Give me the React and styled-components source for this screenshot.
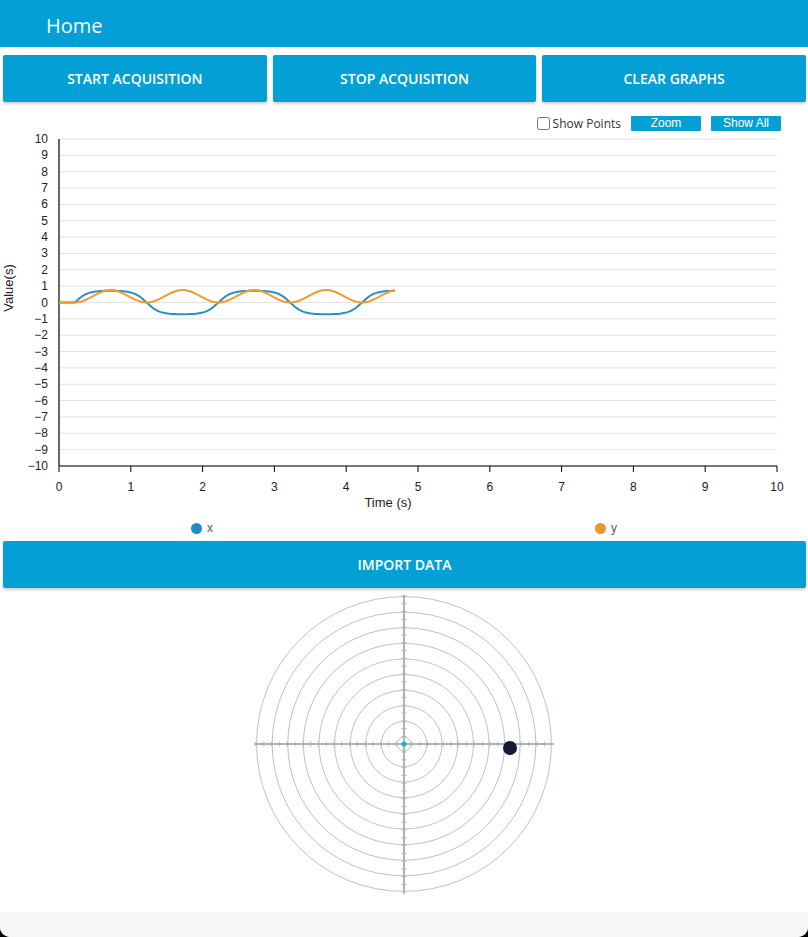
import React, { useState } from 'react';
import styled, { createGlobalStyle } from 'styled-components';

const GlobalStyle = createGlobalStyle`
  html, body {
    margin: 0;
    padding: 0;
    background: #000;
  }
  * { box-sizing: border-box; }
`;

const BLUE = '#049fd4';

// chart geometry (inside the line chart svg)
const PL = 59;
const PR = 777;
const PT = 8;
const PB = 335;
const xs = (t) => PL + (t / 10) * (PR - PL);
const ys = (v) => PT + ((10 - v) / 20) * (PB - PT);

const buildSeries = () => {
  const x = [];
  const y = [];
  for (let t = 0; t <= 4.68; t += 0.02) {
    const s = t < 0.22 ? 0 : Math.sin(Math.PI * (t - 0.22));
    const xv = (0.72 * Math.tanh(1.7 * s)) / Math.tanh(1.7);
    const yv = 0.76 * s * s;
    x.push(`${xs(t).toFixed(1)},${ys(xv).toFixed(1)}`);
    y.push(`${xs(t).toFixed(1)},${ys(yv).toFixed(1)}`);
  }
  return { x: x.join(' '), y: y.join(' ') };
};

const series = buildSeries();

const App = () => {
  const [showPoints, setShowPoints] = useState(false);
  const yTicks = [];
  for (let v = 10; v >= -10; v--) yTicks.push(v);
  const xTicks = [0, 1, 2, 3, 4, 5, 6, 7, 8, 9, 10];

  const rings = [];
  for (let k = 0; k < 10; k++) rings.push(7 + k * 15.6);
  const ticks = [];
  for (let d = -148; d <= 148; d += 7.8) ticks.push(d);

  return (
    <Page>
      <GlobalStyle />
      <Header>
        <Title>Home</Title>
      </Header>

      <ButtonRow>
        <ActionButton>START ACQUISITION</ActionButton>
        <ActionButton>STOP ACQUISITION</ActionButton>
        <ActionButton>CLEAR GRAPHS</ActionButton>
      </ButtonRow>

      <ChartControls>
        <CheckLabel>
          <input
            type="checkbox"
            checked={showPoints}
            onChange={() => setShowPoints(!showPoints)}
          />
          Show Points
        </CheckLabel>
        <SmallButton>Zoom</SmallButton>
        <SmallButton>Show All</SmallButton>
      </ChartControls>

      <LineChart width="808" height="384" viewBox="0 0 808 384">
        {yTicks.map((v) => (
          <g key={v}>
            <line x1={PL} x2={PR} y1={ys(v)} y2={ys(v)} stroke="#e2e2e2" strokeWidth="1" />
            <text x="48" y={ys(v) + 4} textAnchor="end" fontSize="12" fill="#222">
              {v < 0 ? `\u2212${-v}` : v}
            </text>
          </g>
        ))}
        <line x1={PL} x2={PL} y1={PT} y2={PB} stroke="#000" strokeWidth="1.2" />
        <line x1={PL} x2={PR} y1={PB} y2={PB} stroke="#000" strokeWidth="1.2" />
        {xTicks.map((t) => (
          <g key={t}>
            <line x1={xs(t)} x2={xs(t)} y1={PB} y2={PB + 6} stroke="#000" strokeWidth="1" />
            <text x={xs(t)} y={PB + 25} textAnchor="middle" fontSize="12" fill="#222">
              {t}
            </text>
          </g>
        ))}
        <text x="388" y="376" textAnchor="middle" fontSize="13" fill="#222">
          Time (s)
        </text>
        <text
          x="0"
          y="0"
          transform="translate(13 157) rotate(-90)"
          textAnchor="middle"
          fontSize="13"
          fill="#222"
        >
          Value(s)
        </text>
        <polyline points={series.x} fill="none" stroke="#2a8ec6" strokeWidth="2" />
        <polyline points={series.y} fill="none" stroke="#f39a2e" strokeWidth="2" />
      </LineChart>

      <Legend>
        <LegendItem>
          <Dot color="#1f8cc9" />x
        </LegendItem>
        <LegendItem>
          <Dot color="#f0932b" />y
        </LegendItem>
      </Legend>

      <WideButton>IMPORT DATA</WideButton>

      <PolarArea>
        <svg width="320" height="324" viewBox="-160 -156 320 324">
          {rings.map((r) => (
            <circle key={r} cx="0" cy="0" r={r} fill="none" stroke="#9ea6ad" strokeWidth="0.7" />
          ))}
          <line x1="-150" x2="150" y1="0" y2="0" stroke="#adb3b9" strokeWidth="2" />
          <line x1="0" x2="0" y1="-149" y2="150" stroke="#adb3b9" strokeWidth="2" />
          {ticks.map((d) => (
            <g key={d}>
              <line x1={d} x2={d} y1="-2.5" y2="2.5" stroke="#adb3b9" strokeWidth="1" />
              <line x1="-2.5" x2="2.5" y1={d} y2={d} stroke="#adb3b9" strokeWidth="1" />
            </g>
          ))}
          <circle cx="0" cy="0" r="2.6" fill="#2aa8e2" />
          <circle cx="106" cy="4" r="7" fill="#131a3a" />
        </svg>
      </PolarArea>

      <Footer />
    </Page>
  );
};

export default App;

const Page = styled.div`
  width: 808px;
  height: 937px;
  overflow: hidden;
  background: #fff;
  border-radius: 0 0 10px 10px;
  display: flex;
  flex-direction: column;
  font-family: 'Open Sans', 'Liberation Sans', sans-serif;
`;

const Header = styled.header`
  height: 47px;
  background: ${BLUE};
  display: flex;
  align-items: center;
  padding: 3px 46px 0;
`;

const Title = styled.h1`
  margin: 0;
  font-size: 20px;
  font-weight: 400;
  color: #f2fbff;
  font-family: 'Open Sans', sans-serif;
`;

const ButtonRow = styled.div`
  display: grid;
  grid-template-columns: repeat(3, 1fr);
  gap: 6px;
  padding: 8px 2px 0 3px;
`;

const ActionButton = styled.button`
  height: 47px;
  border: none;
  border-radius: 2px;
  background: ${BLUE};
  color: #fff;
  font-family: 'Open Sans', sans-serif;
  font-size: 14px;
  font-weight: 600;
  box-shadow: 0 2px 3px rgba(0, 0, 0, 0.2);
  cursor: pointer;
`;

const WideButton = styled(ActionButton)`
  margin: 0 2px 0 3px;
`;

const ChartControls = styled.div`
  display: flex;
  justify-content: flex-end;
  align-items: center;
  gap: 10px;
  height: 15px;
  margin-top: 14px;
  padding-right: 27px;
`;

const CheckLabel = styled.label`
  display: flex;
  align-items: center;
  gap: 3px;
  font-size: 12px;
  color: #333;
  font-family: 'Open Sans', sans-serif;

  input {
    margin: 0;
    width: 13px;
    height: 13px;
  }
`;

const SmallButton = styled.button`
  width: 70px;
  height: 15px;
  padding: 0;
  border: none;
  border-radius: 1px;
  background: ${BLUE};
  color: #fff;
  font-family: 'Liberation Sans', Arial, sans-serif;
  font-size: 12px;
  line-height: 15px;
  cursor: pointer;
`;

const LineChart = styled.svg`
  display: block;
  font-family: 'Liberation Sans', Arial, sans-serif;
`;

const Legend = styled.div`
  display: flex;
  height: 26px;
  align-items: center;
`;

const LegendItem = styled.div`
  flex: 1;
  display: flex;
  justify-content: center;
  align-items: center;
  gap: 5px;
  font-family: 'Liberation Sans', Arial, sans-serif;
  font-size: 12px;
  color: #555;
`;

const Dot = styled.span`
  width: 11px;
  height: 11px;
  border-radius: 50%;
  background: ${({ color }) => color};
`;

const PolarArea = styled.div`
  height: 324px;
  display: flex;
  justify-content: center;

  svg {
    display: block;
  }
`;

const Footer = styled.div`
  flex: 1;
  background: #f6f8f8;
`;
